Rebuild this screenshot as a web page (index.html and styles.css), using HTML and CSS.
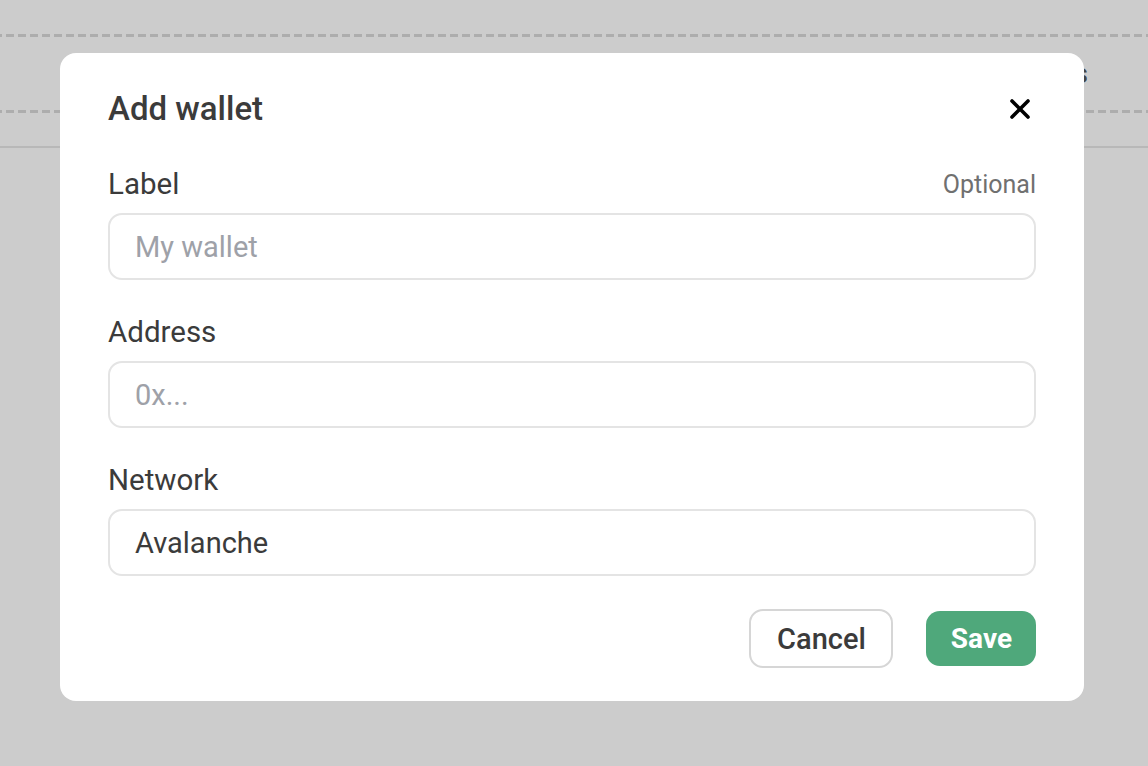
FILE: index.html
```html
<!DOCTYPE html>
<html lang="en">
<head>
<meta charset="utf-8">
<title>Add wallet</title>
<link rel="stylesheet" href="styles.css">
</head>
<body>
<div class="page">
  <div class="dash-line"></div>
  <div class="topbar">
    <span class="topbar-text">Wallets</span>
  </div>
  <div class="dash-line"></div>
  <div class="divider"></div>
</div>

<div class="modal" role="dialog" aria-labelledby="modal-title">
  <div class="modal-header">
    <h2 id="modal-title" class="modal-title">Add wallet</h2>
    <button class="close-btn" aria-label="Close">
      <svg width="20" height="20" viewBox="0 0 20 20" fill="none">
        <path d="M2 2L18 18M18 2L2 18" stroke="#000" stroke-width="3.6" stroke-linecap="round"/>
      </svg>
    </button>
  </div>

  <div class="fields">
    <div class="field">
      <div class="field-label-row">
        <label class="field-label">Label</label>
        <span class="field-hint">Optional</span>
      </div>
      <div class="input"><span class="placeholder">My wallet</span></div>
    </div>

    <div class="field">
      <div class="field-label-row">
        <label class="field-label">Address</label>
      </div>
      <div class="input"><span class="placeholder">0x...</span></div>
    </div>

    <div class="field">
      <div class="field-label-row">
        <label class="field-label">Network</label>
      </div>
      <div class="input"><span class="value">Avalanche</span></div>
    </div>
  </div>

  <div class="actions">
    <button class="btn btn-cancel">Cancel</button>
    <button class="btn btn-save">Save</button>
  </div>
</div>
</body>
</html>
```

FILE: styles.css
```css
* { box-sizing: border-box; }

html, body {
  margin: 0;
  padding: 0;
  height: 100%;
}

body {
  background: #cccccc;
  font-family: Roboto, "Noto Sans", "Liberation Sans", sans-serif;
  color: #3b3b3b;
  overflow: hidden;
}

.page {
  padding-top: 34px;
}

.dash-line {
  height: 3px;
  background: repeating-linear-gradient(90deg,
    #adadad 0 2px, transparent 2px 6px, #adadad 6px 12px);
}

.topbar {
  height: 73px;
  display: flex;
  align-items: center;
  justify-content: flex-end;
  padding-right: 60px;
}

.topbar-text {
  font-size: 28px;
  font-weight: 500;
  color: #444;
}

.divider {
  margin-top: 33px;
  height: 2px;
  background: #b8b8b8;
}

.modal {
  position: absolute;
  left: 60px;
  top: 53px;
  width: 1024px;
  height: 648px;
  background: #ffffff;
  border-radius: 16px;
  padding: 35px 48px 0 48px;
}

.modal-header {
  display: flex;
  align-items: center;
  justify-content: space-between;
  height: 40px;
  margin-bottom: 38px;
}

.modal-title {
  margin: 0;
  font-size: 33px;
  line-height: 40px;
  font-weight: 500;
  color: #3b3b3b;
  padding-top: 2px;
}

.close-btn {
  background: none;
  border: 0;
  padding: 0;
  margin-right: 6px;
  margin-top: 2px;
  width: 20px;
  height: 20px;
  display: flex;
  cursor: pointer;
}

.fields {
  display: flex;
  flex-direction: column;
  gap: 34px;
}

.field-label-row {
  display: flex;
  align-items: center;
  justify-content: space-between;
  height: 36px;
  margin-bottom: 11px;
}

.field-label {
  font-size: 29.5px;
  line-height: 36px;
  color: #3b3b3b;
}

.field-hint {
  font-size: 25px;
  color: #707070;
}

.input {
  height: 67px;
  border: 2px solid #e4e4e4;
  border-radius: 14px;
  display: flex;
  align-items: center;
  padding-left: 25px;
  font-size: 29px;
}

.placeholder {
  color: #9ea1a8;
}

.value {
  color: #3b3b3b;
}

.actions {
  display: flex;
  justify-content: flex-end;
  align-items: center;
  gap: 33px;
  margin-top: 33px;
}

.btn {
  font-family: inherit;
  font-size: 29px;
  font-weight: 500;
  border-radius: 14px;
  cursor: pointer;
}

.btn-cancel {
  height: 59px;
  padding: 0 25px 0 26px;
  background: #fff;
  border: 2px solid #d6d6d6;
  color: #3b3b3b;
}

.btn-save {
  height: 55px;
  padding: 0 24px 0 25px;
  background: #4fa87b;
  border: 0;
  color: #fff;
  font-weight: 700;
  font-size: 28px;
}
```
